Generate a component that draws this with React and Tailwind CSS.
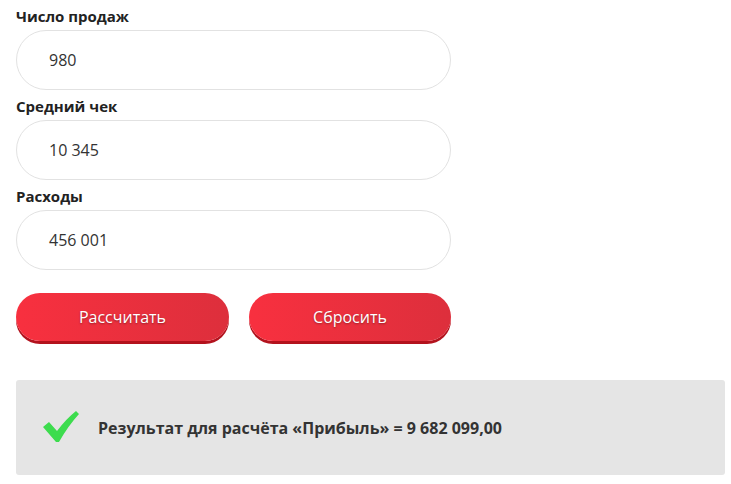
const fields = [
  { label: "Число продаж", value: "980" },
  { label: "Средний чек", value: "10 345" },
  { label: "Расходы", value: "456 001" },
];

export default function App() {
  return (
    <div className="min-h-screen bg-white px-4 pt-[5px] font-['Open_Sans',sans-serif] text-[#333]">
      <div className="w-[435px]">
        {fields.map((f) => (
          <div key={f.label} className="mb-[5px]">
            <div className="text-[15px] font-bold leading-[22px] text-[#222]">{f.label}</div>
            <div className="mt-[3px] flex h-[60px] items-center rounded-full border border-[#e2e2e2] bg-white pl-8 text-[16px]">
              {f.value}
            </div>
          </div>
        ))}
      </div>
      <div className="mt-[23px] flex gap-5">
        <button className="h-[48px] w-[213px] rounded-full bg-gradient-to-r from-[#f8303f] to-[#dd2f3c] text-[16px] text-white shadow-[0_3px_0_#b3121d] [text-shadow:0_1px_2px_rgba(0,0,0,0.35)]">
          Рассчитать
        </button>
        <button className="h-[48px] w-[202px] rounded-full bg-gradient-to-r from-[#f8303f] to-[#dd2f3c] text-[16px] text-white shadow-[0_3px_0_#b3121d] [text-shadow:0_1px_2px_rgba(0,0,0,0.35)]">
          Сбросить
        </button>
      </div>
      <div className="mt-[39px] flex h-[95px] w-[709px] items-center rounded-[3px] bg-[#e5e5e5] pl-[26px]">
        <svg width="38" height="32" viewBox="0 0 38 32" className="mr-[18px] -mt-[2px]">
          <path d="M1 16 L7 11 L15 20 Q24 8 34 0 L37 3 Q26 15 17 31 L14 31 Z" fill="#3ddc4e" />
        </svg>
        <span className="text-[16px] font-bold text-[#333]">
          Результат для расчёта «Прибыль» = 9 682 099,00
        </span>
      </div>
    </div>
  );
}
